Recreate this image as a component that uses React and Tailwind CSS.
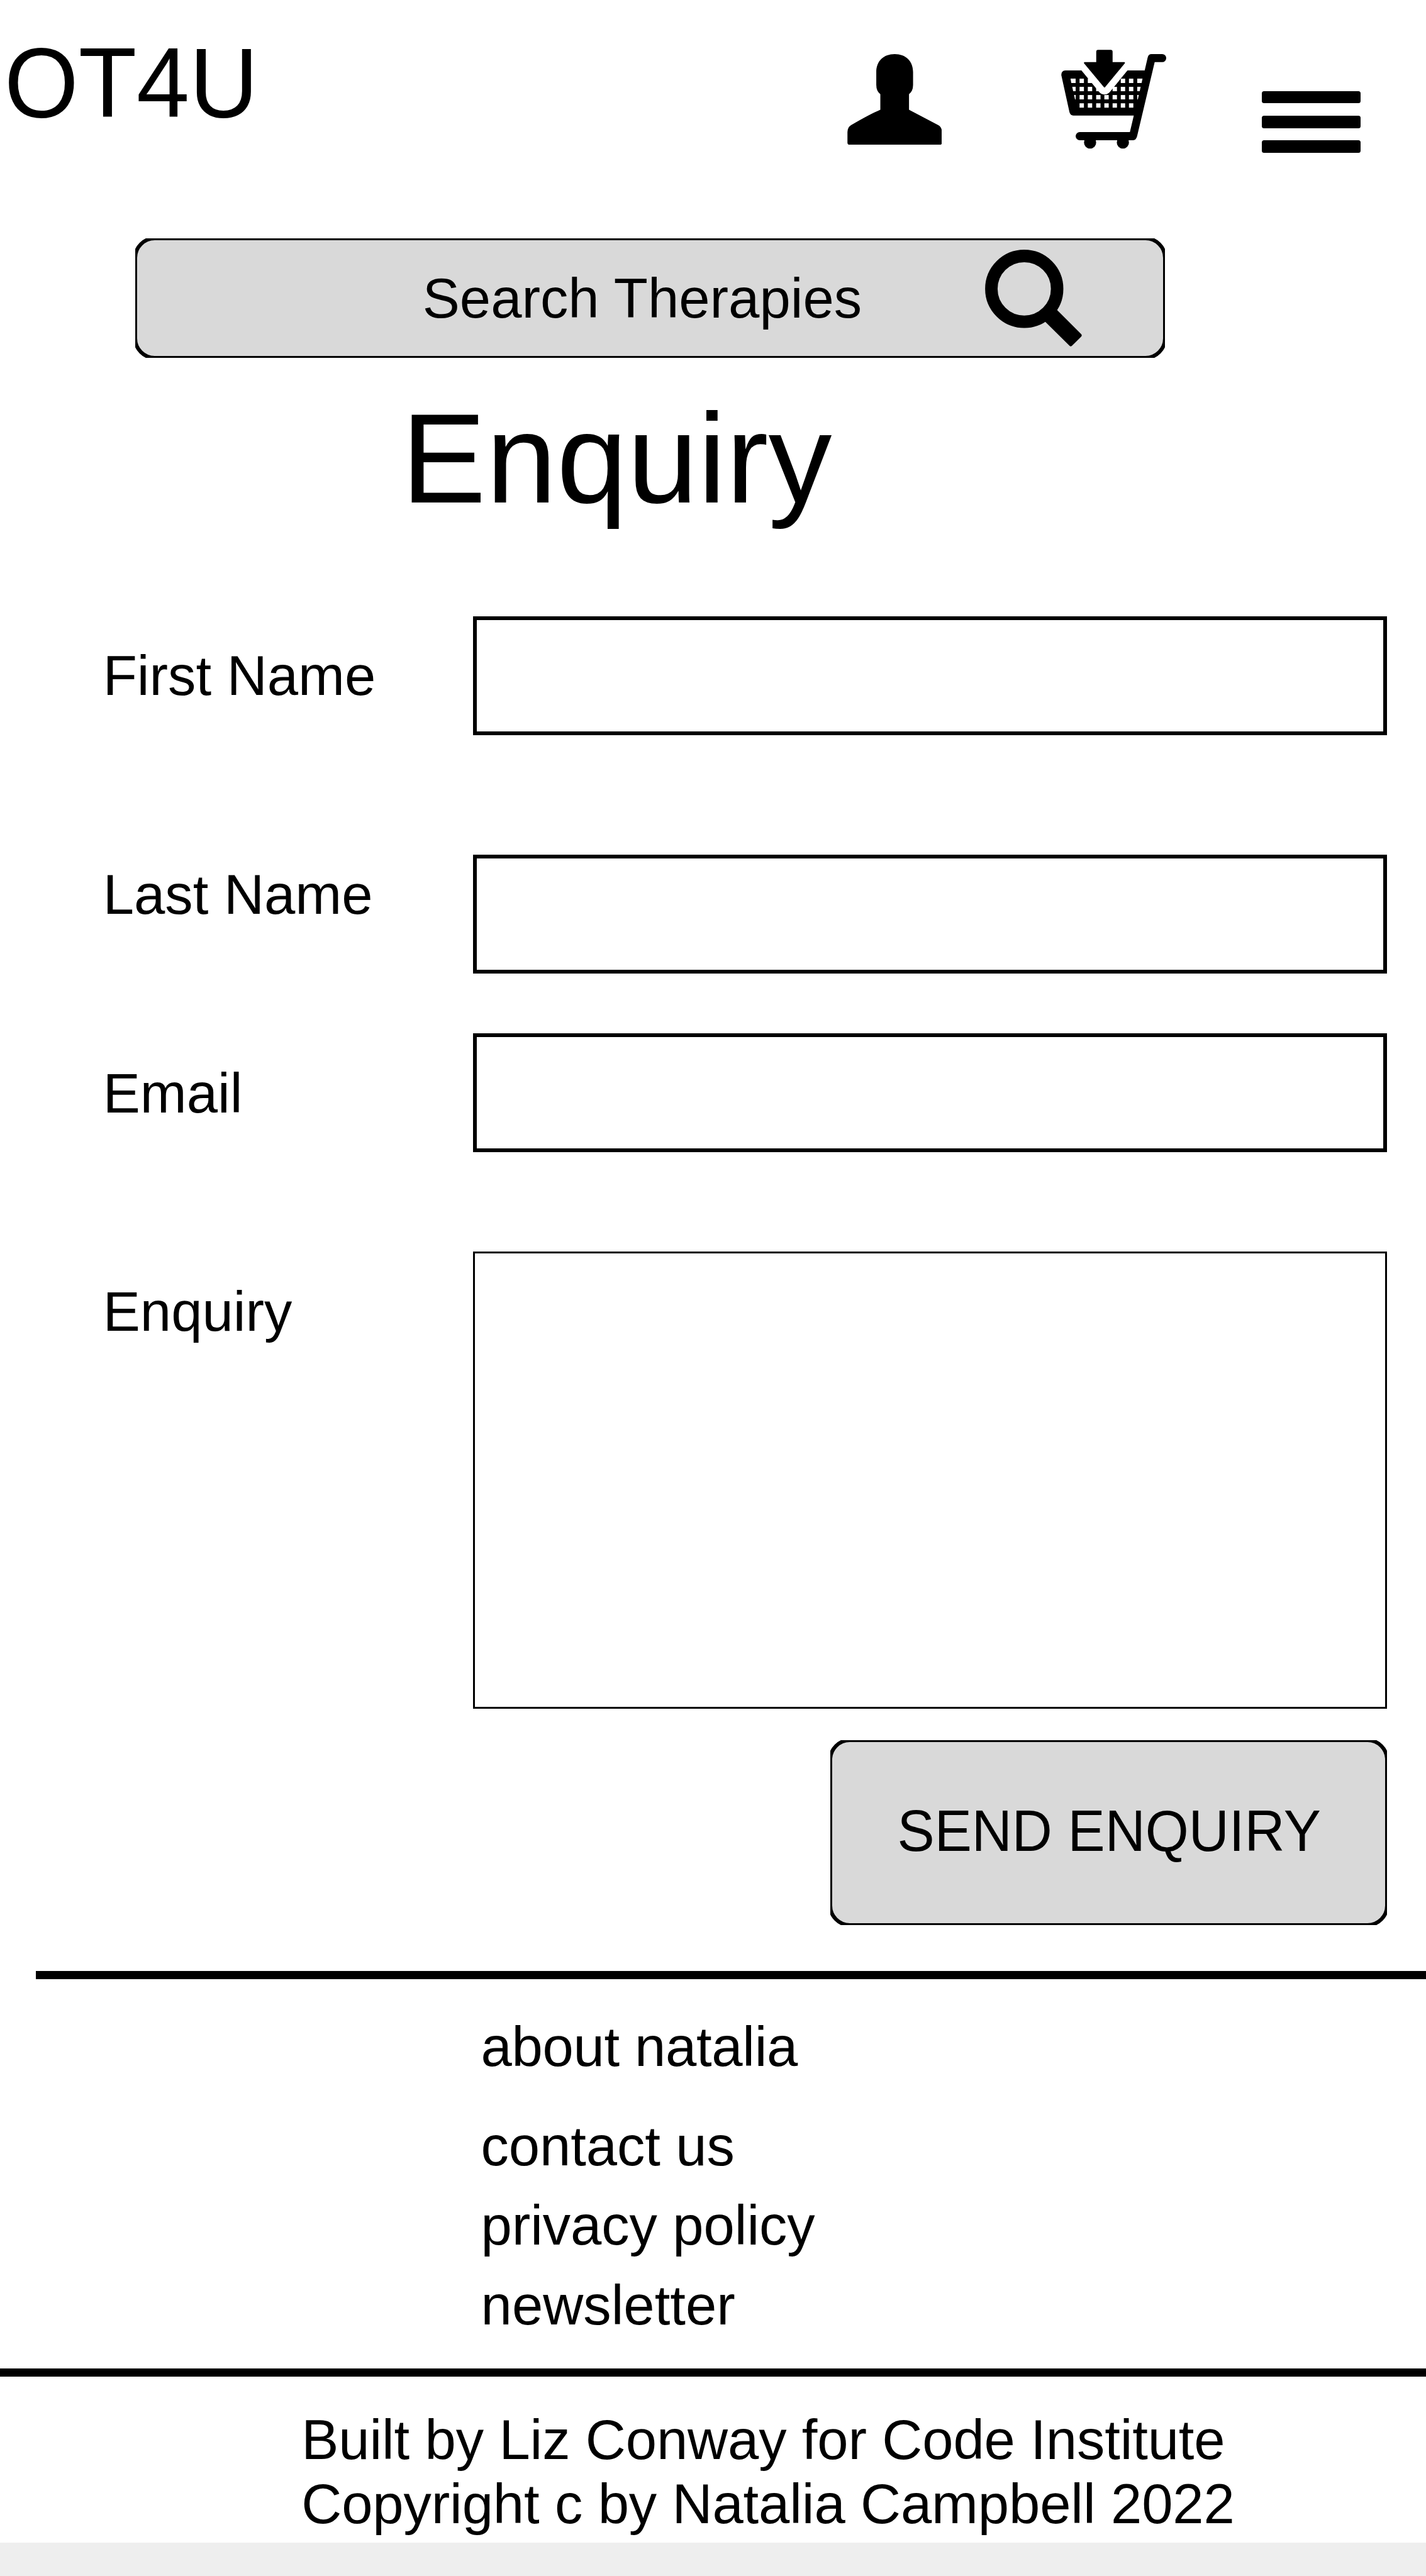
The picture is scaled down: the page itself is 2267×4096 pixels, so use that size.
import React from "react";

const columns = [208, 261, 314.5, 367, 420, 472.5, 525];
const rows = [266, 318.5, 371, 424];

function PersonIcon({ className }) {
  return (
    <svg viewBox="95 77 607 582" preserveAspectRatio="none" className={className} fill="black">
      <path d="M281 192C281 122 328 77 399 77S517 122 517 192V275Q517 315 491 334V434L679 533Q702 546 702 578V646Q702 659 689 659H109Q96 659 96 646V578Q96 546 119 533Q240 462 307 434V334Q281 315 281 275Z" />
    </svg>
  );
}

function CartIcon({ className }) {
  return (
    <svg viewBox="90 80 674 636" preserveAspectRatio="none" className={className} fill="black">
      <mask id="basket" maskUnits="userSpaceOnUse" x="80" y="70" width="700" height="660">
        <rect x="80" y="70" width="700" height="660" fill="white" />
        <path d="M200 118L368 323L536 118" fill="none" stroke="black" strokeWidth="89" strokeLinejoin="round" />
        {rows.map((y) => columns.map((x) => <rect key={`${x}-${y}`} x={x} y={y} width="28" height="28" fill="black" />))}
        <path
          d="M150 266H183V294H155ZM161 318H183V346H167ZM173 371H183V399H179ZM578 266H612L606 294H578ZM578 318H600L594 346H578ZM578 371H588L582 399H578Z"
          fill="black"
        />
      </mask>
      <g mask="url(#basket)">
        <path d="M117 213H626L645 130Q650 108 670 108H738A26 26 0 0 1 738 160H690L577 636Q570 661 552 661H209A26 26 0 0 1 209 609H531L556 503H168Q148 503 143 480L91 243Q90 215 117 213Z" />
        <circle cx="275.500" cy="676" r="39" />
        <circle cx="486" cy="676" r="39" />
      </g>
      <path d="M315 93Q315 81 327 81H408Q420 81 420 93V160H495Q502 162 498 168L372 320Q368 325 364 320L237 168Q234 162 240 160H315Z" />
    </svg>
  );
}

function SearchIcon({ className }) {
  return (
    <svg viewBox="169 162 622 622" className={className}>
      <circle cx="420.500" cy="413.500" r="211" fill="none" stroke="black" strokeWidth="80" />
      <path d="M590 508L786 704Q793 712 786 720L729 777Q720 787 711 779L515 585Z" fill="black" />
    </svg>
  );
}

function Panel({ className, children }) {
  return (
    <div className={`flex overflow-hidden ${className}`}>
      <div className="-m-[3px] flex grow items-start rounded-[34px] border-[6px] border-black bg-[#d9d9d9]">{children}</div>
    </div>
  );
}

function Field({ label, rowClass, labelClass, children }) {
  return (
    <label className={`flex items-start pl-[163.7px] ${rowClass}`}>
      <span className={`w-[588.4px] shrink-0 ${labelClass}`}>{label}</span>
      {children}
    </label>
  );
}

export default function App() {
  return (
    <div className="flex h-[4096px] w-[2267px] flex-col overflow-hidden bg-white font-['Liberation_Sans',Arial,sans-serif] text-[88.7px] leading-none whitespace-nowrap text-black">
      <header className="flex h-[379px] shrink-0 items-start pl-[6.9px]">
        <div className="mt-[57.9px] w-[1339.7px] shrink-0">
          <span className="inline-block origin-[0_84.65%] scale-y-104 text-[151.4px] leading-none">OT4U</span>
        </div>
        <PersonIcon className="mt-[86px] h-[144.2px] w-[150.4px] shrink-0" />
        <CartIcon className="mt-[79.3px] ml-[190.3px] h-[157.6px] w-[167px] shrink-0" />
        <div className="mt-[144.6px] ml-[152.1px] flex w-[157.1px] shrink-0 flex-col gap-[19.6px]">
          <div className="h-[19.7px] rounded-[3.5px] bg-black" />
          <div className="h-[19.7px] rounded-[3.5px] bg-black" />
          <div className="h-[19.7px] rounded-[3.5px] bg-black" />
        </div>
      </header>

      <Panel className="ml-[215px] h-[190px] w-[1637px] shrink-0">
        <div className="flex items-start pl-[453.7px]">
          <span className="mt-[48.6px] w-[893.9px]">Search Therapies</span>
          <SearchIcon className="mt-[14.9px] h-[154.1px] w-[154.1px]" />
        </div>
      </Panel>

      <h1 className="mt-[60px] ml-[638px] h-[202px] shrink-0 text-[201.9px] leading-none">Enquiry</h1>

      <form className="mt-[149px] flex shrink-0 flex-col">
        <Field label="First Name" rowClass="h-[379px]" labelClass="pt-[51px]">
          <input className="h-[189px] w-[1453.4px] border-[6px] border-black" />
        </Field>
        <Field label="Last Name" rowClass="h-[284px]" labelClass="pt-[20px]">
          <input className="h-[189px] w-[1453.4px] border-[6px] border-black" />
        </Field>
        <Field label="Email" rowClass="h-[347px]" labelClass="pt-[52px]">
          <input className="h-[189px] w-[1453.4px] border-[6px] border-black" />
        </Field>
        <Field label="Enquiry" rowClass="h-[777px]" labelClass="pt-[52px]">
          <textarea className="block h-[727px] w-[1453.4px] resize-none border-[3px] border-black" />
        </Field>
        <button type="button" className="ml-[1320.4px] block w-[885px] text-left">
          <Panel className="h-[294px]">
            <span className="mt-[99px] ml-[103.1px] inline-block origin-[0_84.65%] scale-y-104">SEND ENQUIRY</span>
          </Panel>
        </button>
      </form>

      <footer className="mt-[73px] flex grow flex-col">
        <div className="ml-[57px] h-[13px] shrink-0 bg-black" />
        <nav className="flex h-[618.6px] shrink-0 flex-col gap-[37.6px] pt-[63.8px] pl-[764.6px]">
          <a className="mb-[32px] tracking-[-0.35px]">about natalia</a>
          <a className="tracking-[-0.1px]">contact us</a>
          <a className="tracking-[-0.1px]">privacy policy</a>
          <a>newsletter</a>
        </nav>
        <div className="h-[13px] shrink-0 bg-black" />
        <div className="h-[264.8px] shrink-0 pt-[50px] pl-[479.3px] leading-[102.6px] tracking-[-0.15px]">
          <p>Built by Liz Conway for Code Institute</p>
          <p>Copyright c by Natalia Campbell 2022</p>
        </div>
        <div className="grow bg-[#eeeeee]" />
      </footer>
    </div>
  );
}
